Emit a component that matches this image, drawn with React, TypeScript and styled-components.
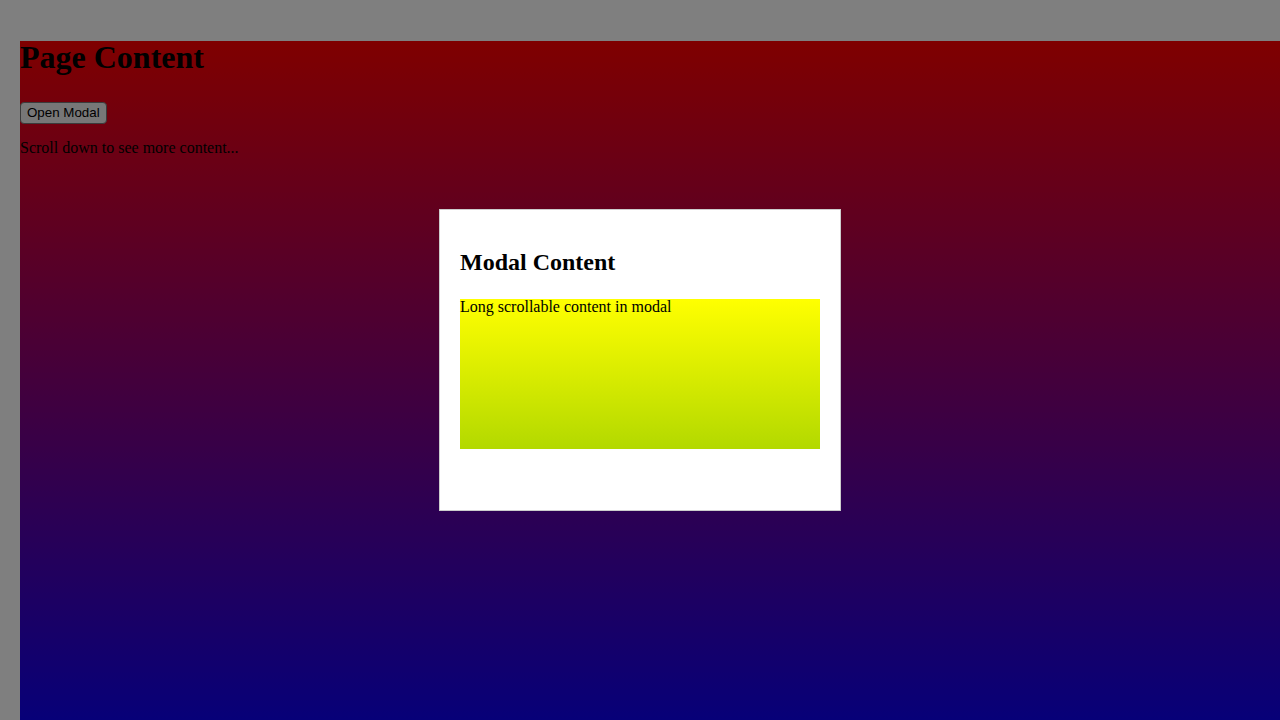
import React from "react";
import styled, { createGlobalStyle } from "styled-components";

const GlobalStyle = createGlobalStyle`
  html, body {
    margin: 0;
    background: #ffffff;
  }
  body {
    padding: 20px 0 0 20px;
    overflow: hidden;
    font-family: "Liberation Serif", "Times New Roman", serif;
  }
`;

const PageContent = styled.div`
  height: 100vh;
  background: linear-gradient(#ff0000, #0000ff);
  color: #000;
`;

// glyphs sit a little higher in a taller line than Liberation's default metrics
const Title = styled.h1`
  margin: 21.44px 0;
  padding-bottom: 7px;
  font-size: 32px;
  line-height: 32px;
  font-weight: bold;
`;

const OpenButton = styled.button`
  display: block;
  font-family: "Liberation Sans", Arial, sans-serif;
  font-size: 13.33px;
  padding: 1px 6px;
  background: #efefef;
  color: #000;
  border: 1px solid #767676;
  border-radius: 4px;
  line-height: 18px;
`;

const Hint = styled.p`
  margin: 14px 0 16px;
  font-size: 16px;
  line-height: 19px;
`;

const Overlay = styled.div`
  position: fixed;
  inset: 0;
  background: rgba(0, 0, 0, 0.5);
`;

const Modal = styled.div`
  position: fixed;
  top: 50%;
  left: 50%;
  transform: translate(-50%, -50%);
  width: 360px;
  height: 260px;
  padding: 20px;
  background: #ffffff;
  border: 1px solid #cccccc;
  overflow: hidden;
`;

const ModalTitle = styled.h2`
  margin: 19.92px 0;
  padding-bottom: 5px;
  font-size: 24px;
  line-height: 24px;
  font-weight: bold;
`;

const ScrollBox = styled.div`
  height: 150px;
  background: linear-gradient(#ffff00, #b3d900);
  font-size: 16px;
  line-height: 16px;
`;

export default function App() {
  return (
    <>
      <GlobalStyle />
      <PageContent>
        <Title>Page Content</Title>
        <OpenButton>Open Modal</OpenButton>
        <Hint>Scroll down to see more content...</Hint>
      </PageContent>
      <Overlay />
      <Modal>
        <ModalTitle>Modal Content</ModalTitle>
        <ScrollBox>Long scrollable content in modal</ScrollBox>
      </Modal>
    </>
  );
}
